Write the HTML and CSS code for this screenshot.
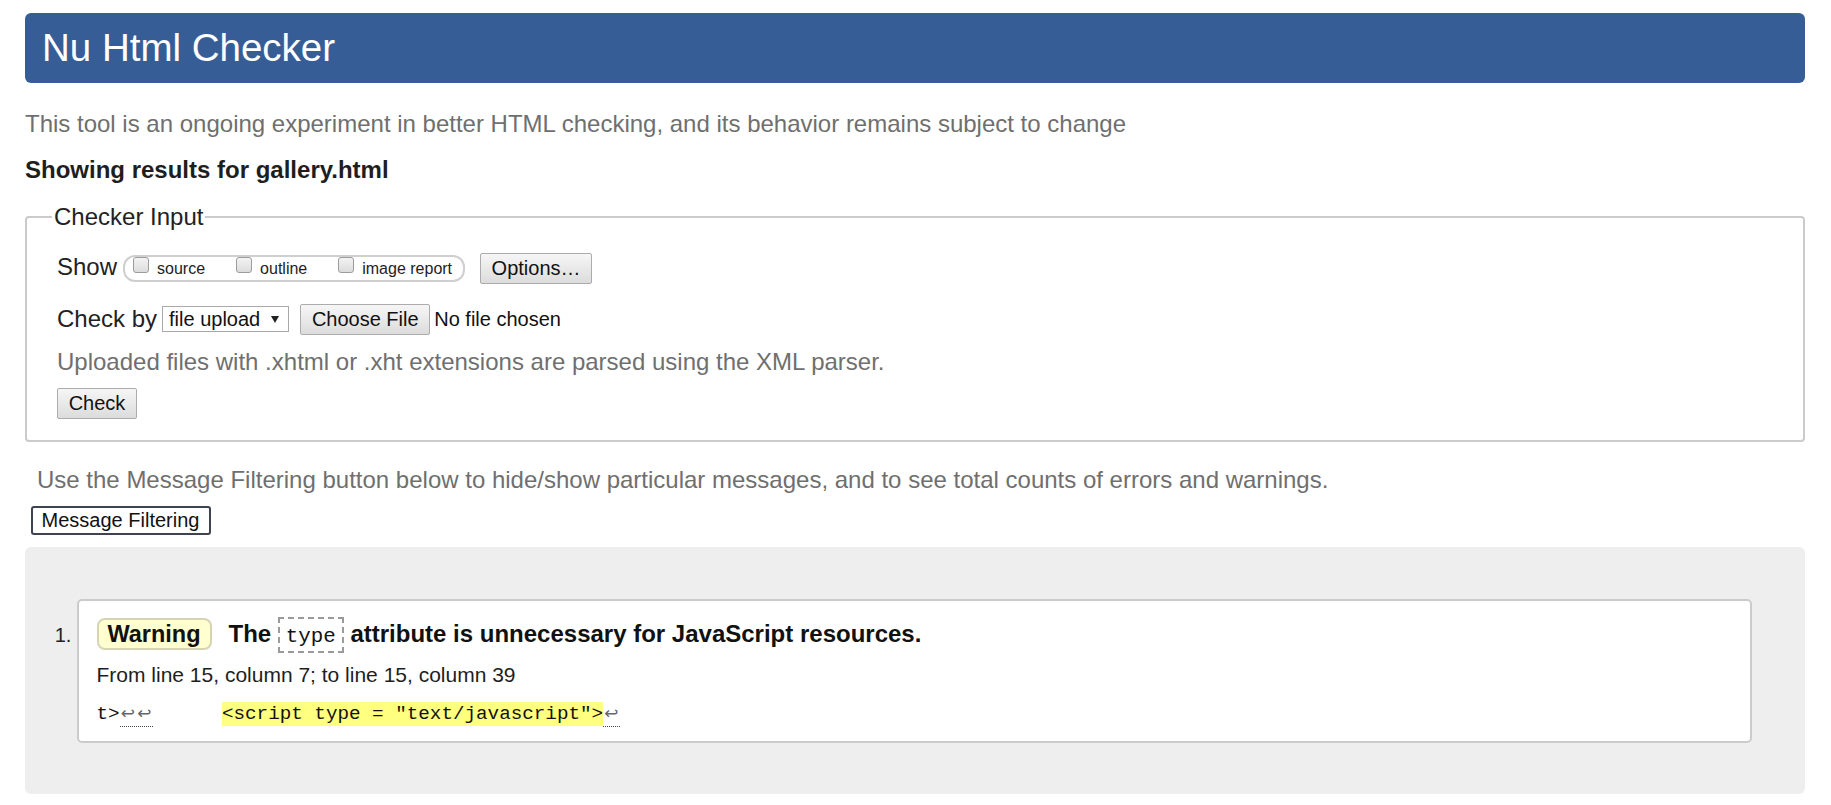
FILE: index.html
```html
<!DOCTYPE html>
<html lang="en">
<head>
<meta charset="utf-8">
<title>Nu Html Checker</title>
<link rel="stylesheet" href="styles.css">
</head>
<body>
<header class="masthead"><h1 class="title">Nu Html Checker</h1></header>
<p class="intro">This tool is an ongoing experiment in better HTML checking, and its behavior remains subject to change</p>
<h2 class="results-for">Showing results for gallery.html</h2>
<form class="checker-form">
  <fieldset class="checker-input">
    <legend class="legend">Checker Input</legend>
    <div class="row row-show">
      <span class="row-label row-label-show">Show</span>
      <span class="pill">
        <label class="opt"><input type="checkbox" class="cb"><span class="opt-text">source</span></label>
        <label class="opt"><input type="checkbox" class="cb"><span class="opt-text">outline</span></label>
        <label class="opt"><input type="checkbox" class="cb"><span class="opt-text">image report</span></label>
      </span>
      <button type="button" class="btn btn-options">Options…</button>
    </div>
    <div class="row row-checkby">
      <span class="row-label row-label-by">Check by</span>
      <span class="select"><span class="select-text">file upload</span><span class="select-arrow"></span></span>
      <span class="btn btn-choose">Choose File</span>
      <span class="file-status">No file chosen</span>
    </div>
    <p class="note">Uploaded files with .xhtml or .xht extensions are parsed using the XML parser.</p>
    <div class="row row-submit"><button type="button" class="btn btn-check">Check</button></div>
  </fieldset>
</form>
<p class="filter-hint">Use the Message Filtering button below to hide/show particular messages, and to see total counts of errors and warnings.</p>
<button type="button" class="btn-filter">Message Filtering</button>
<section class="results">
  <ol class="messages">
    <li class="message">
      <p class="msg-head"><span class="badge">Warning</span><span class="msg-text">The <code class="code-box">type</code> attribute is unnecessary for JavaScript resources.</span></p>
      <p class="location">From line 15, column 7; to line 15, column 39</p>
      <p class="extract"><code class="src">t&gt;<span class="lf"><span class="lf-ch">↩</span><span class="lf-ch">↩</span></span>      <mark class="hl">&lt;script type = "text/javascript"&gt;</mark><span class="lf"><span class="lf-ch">↩</span></span></code></p>
    </li>
  </ol>
</section>
</body>
</html>
```
FILE: styles.css
```css
html {
  background: #fff;
}

body {
  margin: 0;
  padding: 0 26px 0 25px;
  font-family: "Liberation Sans", Arial, sans-serif;
  color: #222;
}

.masthead {
  margin-top: 13px;
  height: 70px;
  background: #375d96;
  border-radius: 6px;
  padding-left: 17px;
  display: flex;
  align-items: center;
}

.title {
  margin: 0;
  font-size: 38.5px;
  font-weight: normal;
  line-height: 44px;
  color: #fff;
}

.intro {
  margin: 27px 0 0;
  font-size: 24px;
  line-height: 28px;
  color: #6f6f6f;
}

.results-for {
  margin: 18px 0 0;
  font-size: 24px;
  line-height: 28px;
  font-weight: bold;
  color: #1e1e1e;
}

.checker-form {
  margin: 18.5px 0 0;
}

.checker-input {
  margin: 0;
  min-width: 0;
  padding: 22px 20px 21px 30px;
  border: 2px solid #cbcbcb;
  border-radius: 4px;
}

.legend {
  margin-left: -5px;
  padding: 0 2px;
  font-size: 24px;
  line-height: 28px;
  color: #222;
}

.row {
  display: flex;
  align-items: center;
  height: 31px;
}

.row-label {
  font-size: 24px;
  line-height: 28px;
  color: #222;
}

.row-label-show {
  margin-bottom: 2px;
  margin-right: 6px;
}

.row-label-by {
  margin-bottom: 1px;
  margin-right: 5px;
}

.pill {
  display: flex;
  align-items: flex-start;
  height: 23px;
  border: 2px solid #cfcfcf;
  border-radius: 12px;
  padding: 0 11px 0 8px;
  font-size: 16px;
}

.opt {
  display: flex;
  align-items: flex-start;
  margin-right: 31px;
}

.opt:last-child {
  margin-right: 0;
}

.cb {
  -webkit-appearance: none;
  appearance: none;
  box-sizing: border-box;
  margin: 0 8px 0 0;
  width: 16px;
  height: 16px;
  border: 1px solid #9c9c9c;
  border-radius: 3px;
  background: linear-gradient(#f3f3f3, #dcdcdc);
}

.opt-text {
  line-height: 16px;
  padding-top: 4.5px;
  color: #222;
}

.btn {
  box-sizing: border-box;
  display: inline-flex;
  align-items: center;
  justify-content: center;
  height: 31px;
  padding: 0 10px;
  border: 1px solid #acacac;
  border-radius: 2px;
  background: linear-gradient(#f6f6f6, #dcdcdc);
  font-family: inherit;
  font-size: 20px;
  line-height: 29px;
  color: #111;
}

.btn-options {
  width: 112px;
  margin-left: 15px;
}

.select {
  box-sizing: border-box;
  display: inline-flex;
  align-items: center;
  height: 26px;
  padding: 0 9px 0 6px;
  border: 1px solid #a9a9a9;
  background: #fff;
  font-size: 20px;
  line-height: 24px;
  color: #111;
}

.select-arrow {
  width: 0;
  height: 0;
  margin-left: 11px;
  border-left: 4px solid transparent;
  border-right: 4px solid transparent;
  border-top: 7px solid #222;
}

.btn-choose {
  width: 130px;
  margin-left: 11px;
}

.file-status {
  margin-left: 4px;
  font-size: 20px;
  line-height: 23px;
  color: #111;
}

.row-checkby {
  margin-top: 20px;
}

.note {
  margin: 13px 0 0;
  font-size: 24px;
  line-height: 28px;
  color: #6f6f6f;
}

.row-submit {
  margin-top: 12px;
}

.btn-check {
  width: 80px;
}

.filter-hint {
  margin: 24px 0 0;
  padding-left: 12px;
  font-size: 24px;
  line-height: 28px;
  color: #6f6f6f;
}

.btn-filter {
  display: block;
  box-sizing: border-box;
  margin: 12px 0 0 5.5px;
  width: 180px;
  height: 29px;
  padding: 0;
  border: 2px solid #3e4352;
  border-radius: 3px;
  background: #fff;
  font-family: inherit;
  font-size: 20px;
  line-height: 25px;
  color: #111;
}

.results {
  margin-top: 12px;
  background: #eeeeee;
  border-radius: 6px;
  padding: 52.5px 53px 51px 52px;
}

.messages {
  margin: 0;
  padding: 0;
  list-style: decimal outside;
  font-size: 20px;
  color: #222;
}

.message {
  background: #fff;
  border: 2px solid #cbcbcb;
  border-radius: 5px;
  padding: 15.5px 18px 14px 17.5px;
}

.msg-head {
  margin: 0;
  display: flex;
  align-items: baseline;
}

.badge {
  box-sizing: border-box;
  width: 115px;
  height: 32px;
  margin-right: 17px;
  border: 2px solid #d7d4b4;
  border-radius: 8px;
  background: #ffffcf;
  font-weight: bold;
  font-size: 23.5px;
  line-height: 28px;
  text-align: center;
  color: #111;
}

.msg-text {
  font-weight: bold;
  font-size: 24px;
  line-height: 28px;
  color: #111;
}

.code-box {
  display: inline-block;
  padding: 6px 6px 2px;
  border: 2px dashed #9a9a9a;
  font-family: "Liberation Mono", "DejaVu Sans Mono", monospace;
  font-weight: normal;
  font-size: 20.8px;
  line-height: 24px;
  color: #111;
}

.location {
  margin: 10px 0 0;
  font-size: 21px;
  line-height: 24px;
  color: #1e1e1e;
}

.extract {
  margin: 13px 0 0;
  line-height: 24px;
}

.src {
  font-family: "Liberation Mono", "DejaVu Sans Mono", monospace;
  font-size: 19.25px;
  line-height: 24px;
  white-space: pre;
  color: #111;
}

.hl {
  display: inline-block;
  background: #ffff80;
  color: #111;
  line-height: 24px;
}

.lf {
  display: inline-block;
  line-height: 23px;
  border-bottom: 1px dotted #444;
}

.lf-ch {
  display: inline-block;
  width: 16.5px;
  text-align: center;
  font-family: "DejaVu Sans", sans-serif;
  font-size: 17px;
  color: #666;
}
```
